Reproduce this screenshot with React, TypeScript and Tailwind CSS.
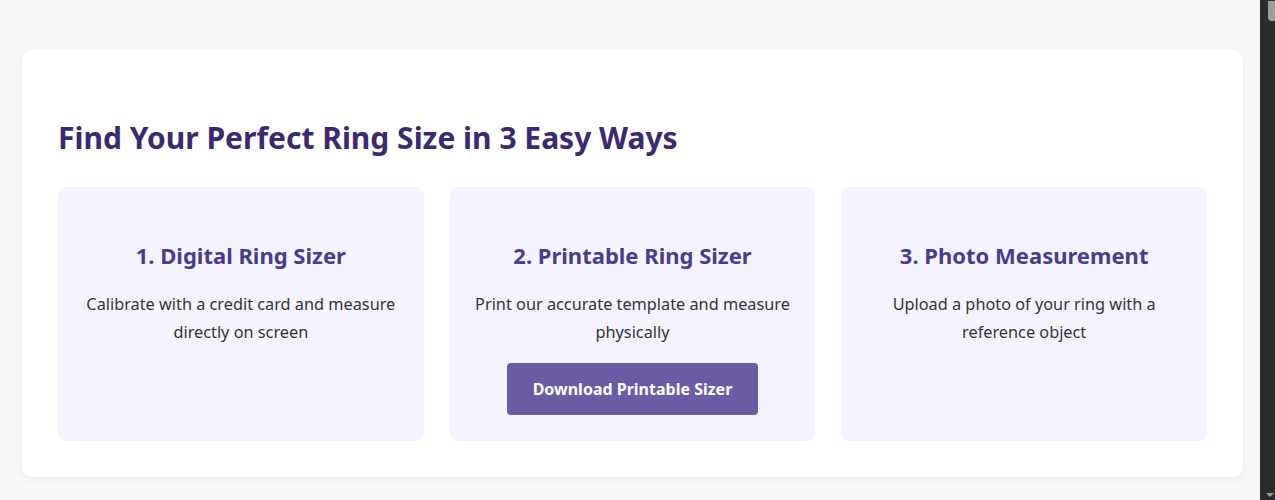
const methods = [
  {
    title: '1. Digital Ring Sizer',
    text: 'Calibrate with a credit card and measure directly on screen',
  },
  {
    title: '2. Printable Ring Sizer',
    text: 'Print our accurate template and measure physically',
    action: 'Download Printable Sizer',
  },
  {
    title: '3. Photo Measurement',
    text: 'Upload a photo of your ring with a reference object',
  },
];

const MethodCard = ({ title, text, action }: { title: string; text: string; action?: string }) => {
  return (
    <div className="flex flex-col items-center rounded-lg bg-[#f5f3ff] px-5 pt-[55px] pb-[26px] text-center">
      <h3 className="text-[22px] font-bold leading-[26px] text-[#483d8b]">{title}</h3>
      <p className="mt-[22px] text-[16.3px] leading-[28px] text-[#333]">{text}</p>
      {action && (
        <button className="mt-[17px] h-[52px] w-[251px] rounded bg-[#6b5ba5] text-[16px] font-bold text-white">
          {action}
        </button>
      )}
    </div>
  );
};

export default function App() {
  return (
    <div
      className="flex min-h-[500px] bg-[#f8f8f8]"
      style={{ fontFamily: '"Noto Sans", "Open Sans", sans-serif' }}
    >
      <div className="flex-1 pt-[50px]">
        <section className="ml-[22px] mr-[17px] rounded-[10px] bg-white px-[36px] pt-[70px] pb-[36px] shadow-[0_2px_10px_rgba(0,0,0,0.06)]">
          <h2 className="text-[30px] font-bold leading-[36px] text-[#3b2a6e]">
            Find Your Perfect Ring Size in 3 Easy Ways
          </h2>
          <div className="mt-[31px] grid grid-cols-3 gap-[26px]">
            {methods.map((m) => (
              <MethodCard key={m.title} {...m} />
            ))}
          </div>
        </section>
      </div>
      {/* scrollbar strip */}
      <div className="flex w-[15px] flex-col items-end bg-[#2c2c2c] pt-[1px]">
        <div className="h-[20px] w-[7px] rounded-bl-[4px] bg-[#9e9e9e]" />
        <div className="flex-1" />
        <div className="mb-[3px] mr-[1px] h-0 w-0 border-x-[4px] border-t-[4px] border-x-transparent border-t-[#9e9e9e]" />
      </div>
    </div>
  );
}
